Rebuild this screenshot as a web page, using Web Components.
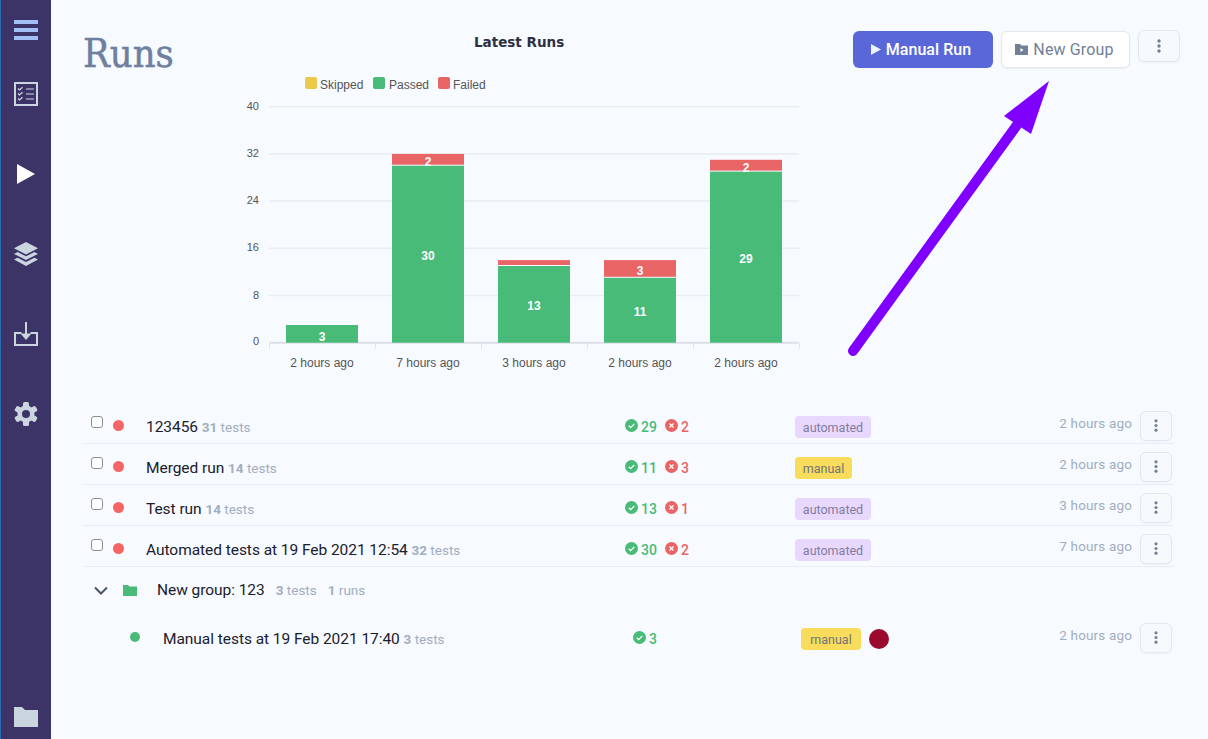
<!DOCTYPE html>
<html><head><meta charset="utf-8"><style>
html,body{margin:0;padding:0;height:100%;background:#f7faff;font-family:"Roboto","Noto Sans",sans-serif;overflow:hidden}
</style></head><body>
<app-shell></app-shell>
<script>
const ICONS={
 menu:'<svg width="24" height="20" viewBox="0 0 24 20"><path fill="#a3bffa" d="M0 0h24v4H0zM0 8h24v4H0zM0 16h24v4H0z"/></svg>',
 list:'<svg width="24" height="24" viewBox="0 0 24 24" fill="none" stroke="#cbd5e0"><rect x="1" y="1" width="22" height="22" stroke-width="2"/><path stroke="#cfd8ea" stroke-width="1.2" d="M4 6.5l1.5 1.5L8.5 5.2M4 11.5l1.5 1.5 3-2.8M4 16.5L5.5 18l3-2.8M12 7h8M12 12h8M12 17h8"/></svg>',
 play:'<svg width="18" height="20" viewBox="0 0 18 20"><path fill="#fff" d="M0 0l18 10L0 20z"/></svg>',
 layers:'<svg width="24" height="24" viewBox="0 0 24 24" fill="#cbd5e0"><path d="M12 0l12 6.2-12 6.2L0 6.2z"/><path d="M3.6 10L12 14.3 20.4 10l3.6 1.9-12 6.2L0 11.900z"/><path d="M3.600 15.700L12 20l8.400-4.300 3.600 1.900L12 24 0 17.600z"/></svg>',
 tray:'<svg width="24" height="24" viewBox="0 0 24 24" fill="none" stroke="#cbd5e0" stroke-width="2"><path d="M7.500 11H1v12h22V11h-6.500"/><path d="M12 0v15"/><path fill="#cbd5e0" stroke="none" d="M6.500 11.500h11L12 18z"/></svg>',
 gear:'<svg width="24" height="24" viewBox="0 0 24 24"><g fill="#cbd5e0"><circle cx="12" cy="12" r="8.500"/><rect x="9" y="0" width="6" height="24" rx="1.500"/><rect x="9" y="0" width="6" height="24" rx="1.500" transform="rotate(60 12 12)"/><rect x="9" y="0" width="6" height="24" rx="1.500" transform="rotate(120 12 12)"/></g><circle cx="12" cy="12" r="4" fill="#3c3366"/></svg>',
 folder:'<svg width="24" height="20" viewBox="0 0 24 20"><path fill="#cbd5e0" d="M0 0h8l3 3h13v17H0z"/></svg>'
};
class AppShell extends HTMLElement{constructor(){super();this.attachShadow({mode:'open'}).innerHTML=`
<style>:host{display:flex;width:1208px;height:739px;position:relative;overflow:hidden}
main{flex:1;min-width:0;display:flex;flex-direction:column}
.arrow{position:absolute;left:0;top:0;pointer-events:none}</style>
<side-bar></side-bar>
<main>
<page-header></page-header>
<run-list>
<run-row name="123456" total="31" passed="29" failed="2" tag="automated" time="2 hours ago" status="failed" check></run-row>
<run-row name="Merged run" total="14" passed="11" failed="3" tag="manual" time="2 hours ago" status="failed" check></run-row>
<run-row name="Test run" total="14" passed="13" failed="1" tag="automated" time="3 hours ago" status="failed" check></run-row>
<run-row name="Automated tests at 19 Feb 2021 12:54" total="32" passed="30" failed="2" tag="automated" time="7 hours ago" status="failed" check></run-row>
<run-group name="New group: 123" tests="3" runs="1"></run-group>
<run-row nested name="Manual tests at 19 Feb 2021 17:40" total="3" passed="3" tag="manual" time="2 hours ago" status="passed" avatar></run-row>
</run-list>
</main>
<svg class="arrow" width="1208" height="739"><path d="M853 351L1017 125" stroke="#7f00ff" stroke-width="10" stroke-linecap="round" fill="none"/><path d="M1049 81L1004 116 1031 134z" fill="#7f00ff"/></svg>`}}
class SideBar extends HTMLElement{constructor(){super();const i=['menu','list','play','layers','tray','gear'];this.attachShadow({mode:'open'}).innerHTML=`
<style>:host{display:flex;flex:none;box-sizing:border-box;width:51px;height:739px;background:#3c3366;border-left:1px solid #2b6cb0;flex-direction:column;align-items:center;padding:20px 0 12px 0}
div{display:flex;justify-content:center;align-items:center;width:24px;height:24px;margin-bottom:56px}
div.menu{height:20px;margin-bottom:42px}div.play{height:20px;margin-top:2px;margin-bottom:58px}
div.folder{height:20px;margin-top:auto;margin-bottom:0}svg{display:block}</style>
${i.map(n=>`<div class="${n}">${ICONS[n]}</div>`).join('')}<div class="folder">${ICONS.folder}</div>`}}
class PageHeader extends HTMLElement{constructor(){super();this.attachShadow({mode:'open'}).innerHTML=`
<style>:host{display:flex;height:403px;box-sizing:border-box;padding:30px 28px 0 32px;align-items:flex-start}
h1{margin:0;width:157px;flex:none;font:400 39.500px/46px "DejaVu Serif Condensed","DejaVu Serif",serif;color:#6f7f9f;-webkit-text-stroke:.5px #6f7f9f}
.a{margin-left:auto;display:flex;gap:8px;align-items:flex-start}</style>
<h1>Runs</h1><runs-chart></runs-chart>
<div class="a"><x-button primary>Manual Run</x-button><x-button>New Group</x-button><more-button large></more-button></div>`}}
class XButton extends HTMLElement{constructor(){super();const p=this.hasAttribute('primary');this.attachShadow({mode:'open'}).innerHTML=`
<style>:host{display:flex;box-sizing:border-box;height:37px;margin-top:1px;padding-right:${p?4:2}px;align-items:center;justify-content:center;gap:5px;border-radius:6px;font-size:16px;letter-spacing:${p?.05:.15}px;font-weight:${p?500:400};width:${p?140:129}px;
background:${p?'#5a67d8':'#fff'};color:${p?'#fff':'#718096'};border:${p?'0':'1px solid #e2e8f0'};box-shadow:${p?'none':'0 1px 2px rgba(0,0,0,.06)'}}</style>
${p?'<svg width="10" height="11" viewBox="0 0 10 11"><path fill="#ebf4ff" d="M0 0l10 5.500L0 11z"/></svg>':'<svg width="13" height="11" viewBox="0 0 13 11"><path fill="#718096" d="M0 0h5l1.500 1.500H13V11H0z"/><path fill="#fff" d="M5.500 4l3 2-3 2z"/></svg>'}<slot></slot>`}}
class MoreButton extends HTMLElement{constructor(){super();const l=this.hasAttribute('large');this.attachShadow({mode:'open'}).innerHTML=`
<style>:host{display:flex;flex:none;box-sizing:border-box;width:${l?42:32}px;height:${l?32:30}px;align-items:center;justify-content:center;background:#f7fafc;border:1px solid #e2e8f0;border-radius:6px;box-shadow:0 1px 2px rgba(0,0,0,.04)}</style>
<svg width="4" height="${l?14:13}" viewBox="0 0 4 14"><g fill="#718096"><circle cx="2" cy="2" r="1.700"/><circle cx="2" cy="7" r="1.700"/><circle cx="2" cy="12" r="1.700"/></g></svg>`}}
class RunsChart extends HTMLElement{constructor(){super();
 const G='#48bb78',R='#e96565',base=342.7,u=5.9;
 const ys=[[40,106.7],[32,153.9],[24,201.1],[16,248.3],[8,295.5],[0,342.7]];
 const data=[[3,0,'2 hours ago',337,0],[30,2,'7 hours ago',256,162],[13,1,'3 hours ago',306,0],[11,3,'2 hours ago',312,271],[29,2,'2 hours ago',259,168]];
 let s='';
 ys.forEach(([v,y])=>{s+=`<path d="M269 ${y}H799" stroke="${v?'#e9edf2':'#dde1e7'}" stroke-width="${v?1.5:2}"/><text x="259" y="${y+3-(v?0:1)}" text-anchor="end" class="y">${v}</text>`});
 [269,375,481,587,693,799].forEach(x=>s+=`<path d="M${x+.5} 343V349" stroke="#e2e6ea"/>`);
 data.forEach((d,i)=>{const x=286+106*i,gy=base-d[0]*u;
  s+=`<rect x="${x}" y="${gy}" width="72" height="${base-gy}" fill="${G}"/>`;
  if(d[1]){const ry=gy-d[1]*u;s+=`<rect x="${x}" y="${ry}" width="72" height="${d[1]*u-1}" fill="${R}"/>`;}
  s+=`<text x="${x+36}" y="${d[3]+4}" class="l" text-anchor="middle">${d[0]}</text>`;
  if(d[4])s+=`<text x="${x+36}" y="${d[4]+4}" class="l" text-anchor="middle">${d[1]}</text>`;
  s+=`<text x="${x+36}" y="367" class="t" text-anchor="middle">${d[2]}</text>`;
 });
 [[305,320,'#ecc94b','Skipped'],[373,389,G,'Passed'],[438,453,R,'Failed']].forEach(([bx,tx,c,t])=>{s+=`<rect x="${bx}" y="77" width="12" height="12" rx="2" fill="${c}"/><text x="${tx}" y="89" class="t">${t}</text>`});
 this.attachShadow({mode:'open'}).innerHTML=`
<style>:host{display:block;flex:none;width:570px;height:350px;margin-left:0}svg{display:block}
text{font-family:"Liberation Sans",Arial,sans-serif}
.t{font-size:12px;fill:#555}.y{font-size:11px;fill:#555}.l{font-size:12px;font-weight:700;fill:#fff}.h{font:700 13.500px "DejaVu Sans",sans-serif;fill:#2d3040}</style>
<svg width="570" height="350" viewBox="240 30 570 350"><text x="474" y="47" class="h">Latest Runs</text>${s}</svg>`}}
class RunList extends HTMLElement{constructor(){super();this.attachShadow({mode:'open'}).innerHTML=`<style>:host{display:block;margin:0 35px 0 32px;font-size:15.500px;letter-spacing:-.05px}</style><slot></slot>`}}
class TestCount extends HTMLElement{constructor(){super();this.attachShadow({mode:'open'}).innerHTML=`<style>:host{color:#a0aec0;font-size:13.500px;letter-spacing:0}b{font-weight:700}</style><b>${this.getAttribute('n')}</b> ${this.getAttribute('label')}`}}
class StatPill extends HTMLElement{constructor(){super();const ok=this.getAttribute('kind')==='ok',c=ok?'#48bb78':'#e96565';this.attachShadow({mode:'open'}).innerHTML=`
<style>:host{display:inline-flex;align-items:center;gap:3px;color:${c};font-size:14px;font-weight:500;${ok?'width:40px;':''}}svg{margin-top:-2px}span{padding-top:2px}</style>
<svg width="13" height="13" viewBox="0 0 13 13"><circle cx="6.500" cy="6.500" r="6.500" fill="${c}"/>${ok?'<path d="M3.700 6.800l2 1.900 3.600-3.800" stroke="#fff" stroke-width="1.300" fill="none"/>':'<path d="M4.500 4.500l4 4M8.500 4.500l-4 4" stroke="#fff" stroke-width="1.200" fill="none"/>'}</svg><span>${this.getAttribute('n')}</span>`}}
class RunTag extends HTMLElement{constructor(){super();const m=this.getAttribute('label')==='manual',n=this.hasAttribute('nested');this.attachShadow({mode:'open'}).innerHTML=`
<style>:host{display:inline-flex;box-sizing:border-box;height:22px;align-items:center;justify-content:center;border-radius:4px;width:${m?(n?60:57):76}px;background:${m?'#f9dc5c':'#e9d8fd'};color:${m?'#6f7477':'#7f7c9f'};font-size:12.500px;letter-spacing:0}</style>${this.getAttribute('label')}`}}
class RunRow extends HTMLElement{constructor(){super();const a=k=>this.getAttribute(k),n=this.hasAttribute('nested');
 this.attachShadow({mode:'open'}).innerHTML=`
<style>:host{display:flex;box-sizing:border-box;height:41px;align-items:center;padding:8px 1px 3px ${n?47:8}px;border-bottom:${n?'0':'1px solid #e8edf3'};${n?'height:40px;border:0;':''}}
input{appearance:none;box-sizing:border-box;width:12px;height:12px;margin:0 10px 8px 0;border:1px solid #8a8f98;border-radius:3px;background:#fff;flex:none}
.d{width:${n?10:11}px;height:${n?10:11}px;border-radius:50%;background:${a('status')==='passed'?'#48bb78':'#f56565'};flex:none;margin-bottom:${n?2:1}px}
.n{width:${n?470:479}px;margin-left:${n?23:22}px;flex:none;color:#1a202c;white-space:nowrap;margin-top:2px}
.s{width:${n?168:170}px;flex:none;display:flex;margin-top:1px}
.g{display:flex;align-items:center;gap:8px;margin-top:3px}
.c{width:20px;height:20px;border-radius:50%;background:#9b0a2e}
.t{margin-left:auto;color:#a0aec0;font-size:13.500px;letter-spacing:.15px;margin-right:8px;margin-bottom:5px;white-space:nowrap}</style>
${n?'':'<input type="checkbox">'}<span class="d"></span>
<span class="n">${a('name')} <test-count n="${a('total')}" label="tests"></test-count></span>
<span class="s"><stat-pill kind="ok" n="${a('passed')}"></stat-pill>${a('failed')?`<stat-pill kind="bad" n="${a('failed')}"></stat-pill>`:''}</span>
<span class="g"><run-tag label="${a('tag')}" ${n?'nested':''}></run-tag>${this.hasAttribute('avatar')?'<span class="c"></span>':''}</span>
<span class="t">${a('time')}</span><more-button></more-button>`}}
class RunGroup extends HTMLElement{constructor(){super();const a=k=>this.getAttribute(k);this.attachShadow({mode:'open'}).innerHTML=`
<style>:host{display:flex;box-sizing:border-box;height:48px;align-items:center;padding:0 0 2px 11px;color:#1a202c;font-size:15.500px;letter-spacing:-.05px}
.f{margin-left:15px;margin-right:20px}.m{margin-left:11px;}svg{flex:none}</style>
<svg width="14" height="9" viewBox="0 0 14 9"><path d="M1 1.500l6 6 6-6" fill="none" stroke="#4a5568" stroke-width="2"/></svg>
<svg class="f" width="14" height="11" viewBox="0 0 14 11"><path fill="#48bb78" d="M0 0h5l1.500 1.500H14V11H0z"/></svg>
<span>${a('name')}</span><test-count class="m" n="${a('tests')}" label="tests"></test-count><test-count class="m" n="${a('runs')}" label="runs"></test-count>`}}
[['more-button',MoreButton],['x-button',XButton],['side-bar',SideBar],['runs-chart',RunsChart],['page-header',PageHeader],['test-count',TestCount],['stat-pill',StatPill],['run-tag',RunTag],['run-row',RunRow],['run-group',RunGroup],['run-list',RunList],['app-shell',AppShell]].forEach(([n,c])=>customElements.define(n,c));
</script></body></html>
